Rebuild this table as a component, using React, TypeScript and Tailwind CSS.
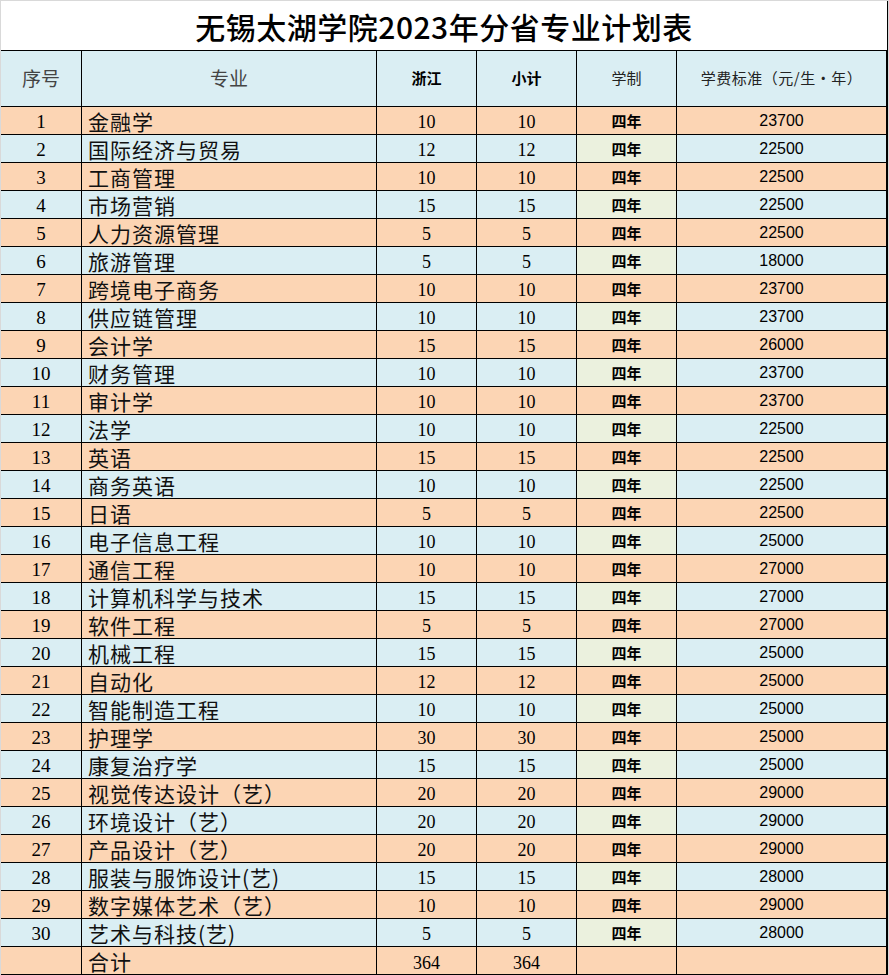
import React from "react";

const rows: [string, number, number][] = [
  ["金融学", 10, 23700],
  ["国际经济与贸易", 12, 22500],
  ["工商管理", 10, 22500],
  ["市场营销", 15, 22500],
  ["人力资源管理", 5, 22500],
  ["旅游管理", 5, 18000],
  ["跨境电子商务", 10, 23700],
  ["供应链管理", 10, 23700],
  ["会计学", 15, 26000],
  ["财务管理", 10, 23700],
  ["审计学", 10, 23700],
  ["法学", 10, 22500],
  ["英语", 15, 22500],
  ["商务英语", 10, 22500],
  ["日语", 5, 22500],
  ["电子信息工程", 10, 25000],
  ["通信工程", 10, 27000],
  ["计算机科学与技术", 15, 27000],
  ["软件工程", 5, 27000],
  ["机械工程", 15, 25000],
  ["自动化", 12, 25000],
  ["智能制造工程", 10, 25000],
  ["护理学", 30, 25000],
  ["康复治疗学", 15, 25000],
  ["视觉传达设计（艺）", 20, 29000],
  ["环境设计（艺）", 20, 29000],
  ["产品设计（艺）", 20, 29000],
  ["服装与服饰设计(艺)", 15, 28000],
  ["数字媒体艺术（艺）", 10, 29000],
  ["艺术与科技(艺)", 5, 28000],
];

const grid = "grid grid-cols-[81px_295px_100px_100px_100px_211px]";
const cjk = "font-['Noto_Sans_CJK_SC',sans-serif]";
const serifNum = "font-['Liberation_Serif','Noto_Sans_CJK_SC',serif]";
const sansNum = "font-['Liberation_Sans',Arial,sans-serif]";

export default function App() {
  return (
    <div className="w-[889px] h-[975px] bg-white border-t border-l border-r border-[#d9d9d9] overflow-hidden">
      <div className="w-[888px] h-[49px] border-r-2 border-black flex items-center justify-center">
        <span className={`${cjk} text-[30px] leading-none font-medium text-black tracking-[0.5px]`}>
          无锡太湖学院2023年分省专业计划表
        </span>
      </div>
      <div className="w-[888px] border-t border-black">
        <div className={`${grid} h-[56px] bg-[#daeef3] border-b border-black`}>
          <div className={`border-r border-black flex items-center justify-center ${cjk} text-[19px] text-[#444]`}>序号</div>
          <div className={`border-r border-black flex items-center justify-center ${cjk} text-[19px] text-[#444]`}>专业</div>
          <div className={`border-r border-black flex items-center justify-center ${cjk} text-[15px] font-bold text-black`}>浙江</div>
          <div className={`border-r border-black flex items-center justify-center ${cjk} text-[15px] font-bold text-black`}>小计</div>
          <div className={`border-r border-black flex items-center justify-center ${cjk} text-[15px] text-[#222]`}>学制</div>
          <div className={`border-r-2 border-black flex items-center justify-center ${cjk} text-[15px] text-[#222] tracking-[0.5px]`}>学费标准（元/生·年）</div>
        </div>
        {rows.map(([name, n, fee], i) => {
          const odd = i % 2 === 0;
          const bg = odd ? "bg-[#fcd5b4]" : "bg-[#daeef3]";
          const eduBg = odd ? "bg-[#fcd5b4]" : "bg-[#ebf1de]";
          return (
            <div key={i} className={`${grid} h-[28px] ${bg} border-b border-black`}>
              <div className={`border-r border-black flex items-center justify-center pt-[1px] ${serifNum} text-[19px] leading-none text-black`}>{i + 1}</div>
              <div className={`border-r border-black flex items-center pl-[6px] pt-[1px] ${cjk} text-[21px] leading-none text-[#111] tracking-[1px]`}>{name}</div>
              <div className={`border-r border-black flex items-center justify-center pt-[3px] ${serifNum} text-[18px] leading-none text-black`}>{n}</div>
              <div className={`border-r border-black flex items-center justify-center pt-[3px] ${serifNum} text-[18px] leading-none text-black`}>{n}</div>
              <div className={`border-r border-black ${eduBg} flex items-center justify-center ${cjk} text-[15px] font-bold leading-none text-black`}>四年</div>
              <div className={`border-r-2 border-black flex items-center justify-center ${sansNum} text-[16px] leading-none text-black`}>{fee}</div>
            </div>
          );
        })}
        <div className={`${grid} h-[28px] bg-[#fcd5b4] border-b border-black`}>
          <div className="border-r border-black" />
          <div className={`border-r border-black flex items-center pl-[6px] pt-[1px] ${cjk} text-[21px] leading-none text-[#111] tracking-[1px]`}>合计</div>
          <div className={`border-r border-black flex items-end justify-center pb-[2px] ${serifNum} text-[18px] leading-none text-black`}>364</div>
          <div className={`border-r border-black flex items-end justify-center pb-[2px] ${serifNum} text-[18px] leading-none text-black`}>364</div>
          <div className="border-r border-black" />
          <div className="border-r-2 border-black" />
        </div>
      </div>
    </div>
  );
}
